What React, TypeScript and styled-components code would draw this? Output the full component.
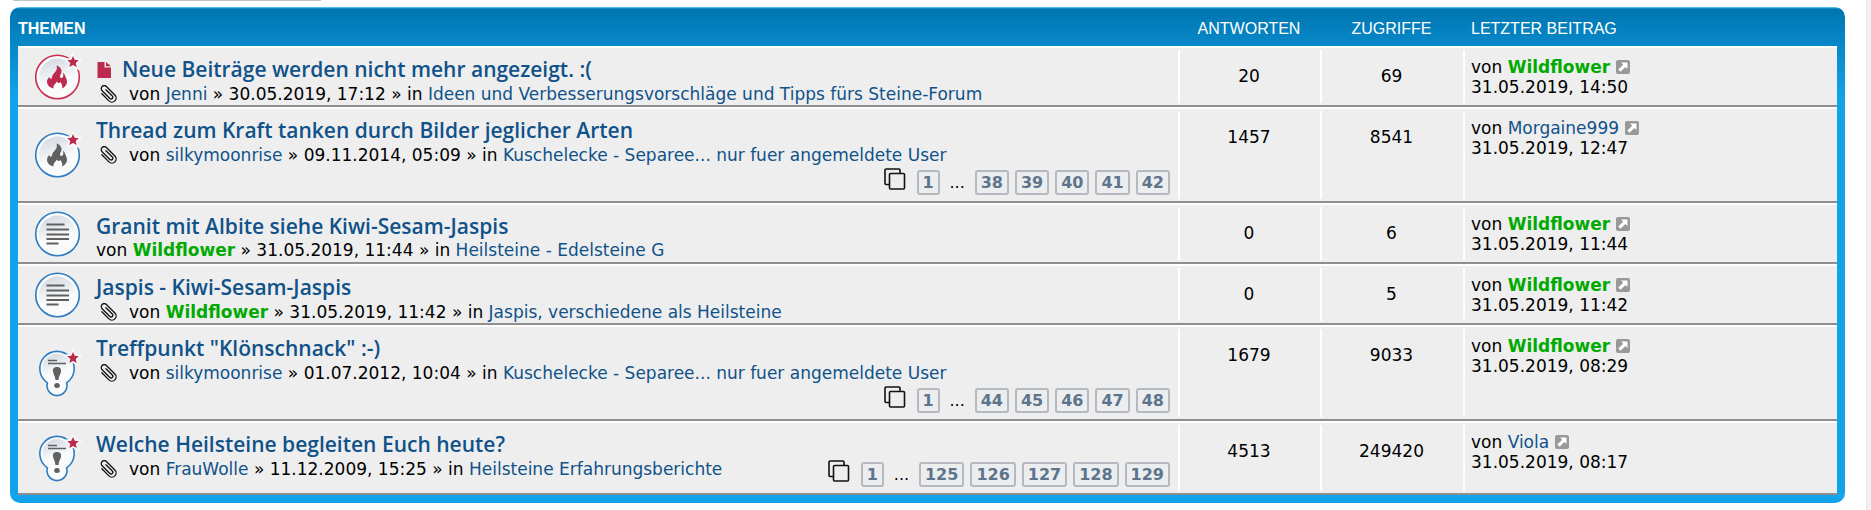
import React from "react";
import styled, { createGlobalStyle } from "styled-components";

const GlobalStyle = createGlobalStyle`
  * { box-sizing: border-box; }
  body {
    margin: 0;
    background: #f0f0f0;
    color: #000;
    font-family: "DejaVu Sans", Verdana, sans-serif;
    font-size: 17px;
  }
`;

const Page = styled.div`
  min-height: 100vh;
  margin-right: 4px;
  border-right: 1px solid #e6e9ed;
  background: #fff;
  padding: 0 21px 7px 10px;
`;

const ActionBar = styled.div`
  width: 308px;
  height: 1px;
  margin: 0 0 6px 3px;
  background: #c4c4c4;
`;

const Panel = styled.section`
  padding: 0 8px 8px;
  border-radius: 10px;
  background: linear-gradient(to bottom, #6aceff 0, #0076b1 2px, #12a3eb 92px, #12a3eb 100%);
`;

const Table = styled.table`
  width: 100%;
  table-layout: fixed;
  border-collapse: separate;
  border-spacing: 0;
`;

const Col = styled.col<{ $w?: string }>`
  width: ${(p) => p.$w ?? "auto"};
`;

const HeadCell = styled.th<{ $align?: string; $strong?: boolean; $indent?: number }>`
  height: 39px;
  padding: 4px 0 0 ${(p) => p.$indent ?? 0}px;
  color: #fff;
  font-family: "Liberation Sans", Arial, sans-serif;
  font-size: 16px;
  line-height: 20px;
  font-weight: ${(p) => (p.$strong ? 700 : 400)};
  text-align: ${(p) => p.$align ?? "left"};
  text-transform: uppercase;
`;

const Cell = styled.td`
  padding: 0;
  border-top: 2px solid #fff;
  border-bottom: 2px solid #8f8f8f;
  background-color: #eee;
  vertical-align: top;
`;

const IconCell = styled(Cell)`
  padding-left: 16px;
  vertical-align: middle;
  line-height: 0;
`;

const DividedCell = styled(Cell)`
  background-image: linear-gradient(#fff, #fff);
  background-size: 2px calc(100% - 4px);
  background-position: left center;
  background-repeat: no-repeat;
`;

const CountCell = styled(DividedCell)`
  padding-top: 18px;
  line-height: 20px;
  text-align: center;
`;

const LastPostCell = styled(DividedCell)`
  padding: 9px 0 0 8px;
  line-height: 20px;
`;

const Topic = styled.div`
  display: flex;
  flex-wrap: wrap;
  align-items: flex-start;
  padding: 8px 8px 0 0;
`;

const TitleLine = styled.div`
  display: flex;
  align-items: flex-start;
  flex: 0 0 100%;
  gap: 10px;
  height: 27px;
`;

const TitleLink = styled.a`
  color: #105289;
  font-family: "Open Sans", "Trebuchet MS", sans-serif;
  font-size: 21px;
  font-weight: 600;
  line-height: 26px;
  text-decoration: none;
`;

const Meta = styled.div<{ $clip?: boolean }>`
  display: flex;
  align-items: center;
  height: 22px;
  padding-bottom: ${(p) => (p.$clip ? 0 : 2)}px;
  line-height: 20px;
  white-space: pre;
`;

const ClipBox = styled.span`
  display: flex;
  width: 33px;
  padding-left: 3px;
`;

const UserLink = styled.a<{ $team?: boolean }>`
  color: ${(p) => (p.$team ? "#00aa00" : "#105289")};
  font-weight: ${(p) => (p.$team ? 700 : 400)};
  text-decoration: none;
`;

const Pagination = styled.nav`
  display: flex;
  align-items: center;
  gap: 6px;
  height: 25px;
  margin: 4px 0 6px auto;
`;

const PageLink = styled.a`
  height: 25px;
  padding: 0 4px;
  border: 2px solid #b4bac0;
  border-radius: 3px;
  background: #ecedee;
  color: #5c758c;
  font-size: 16px;
  font-weight: 700;
  line-height: 22px;
  text-decoration: none;
`;

const Ellipsis = styled.span`
  width: 23px;
  font-size: 16px;
  text-align: center;
`;

const CopyBox = styled.span`
  display: flex;
  margin: 0 5px 7px 0;
`;

const JumpLink = styled.a`
  display: inline-flex;
  margin-left: 6px;
  vertical-align: -1px;
`;

type Kind = "hotUnread" | "hot" | "read" | "announce";

const FLAME =
  "M22 11.700C27.500 14 28 18 26 21C25 22.800 25.500 24.500 27 24.500C29 24.300 29.300 21.500 28.300 19C30.500 20.500 30.500 22.500 31.500 24.500C34 29.500 31.500 33 27.500 35C28.500 32 27 30.500 26 28.500C25 30 23.500 30 22.500 28C22 29.500 19 30.500 18.800 35C13.500 33.500 11.500 29.500 13 26C14 23 16 23.500 16.200 26C17.500 25.500 17 23.500 18.500 21C20.500 18.500 23.500 16.500 22 11.700Z";

function StatusIcon({ kind }: { kind: Kind }) {
  const ring = kind === "hotUnread" ? "#c9304f" : "#2f7cc0";
  const ink = kind === "hotUnread" ? "#bc2a4d" : "#606060";
  const star = kind !== "read";
  return (
    <svg width="48" height="48" viewBox="0 0 48 48" aria-hidden="true">
      <defs>
        <linearGradient id={"disc-" + kind} x1="0" y1="0" x2="0.300" y2="1">
          <stop offset="0.100" stopColor="#d5dbe2" />
          <stop offset="0.700" stopColor="#f8fafb" />
        </linearGradient>
      </defs>
      {kind === "announce" ? (
        <>
          <path
            d="M13.400 33.800A17.200 17.200 0 1 1 32.600 33.800A10 10 0 1 1 13.400 33.800Z"
            fill="#fafbfc"
            stroke={ring}
            strokeWidth="1.600"
          />
          <circle cx="23" cy="19.500" r="14.500" fill={"url(#disc-" + kind + ")"} />
        </>
      ) : (
        <>
          <circle cx="23.500" cy="24" r="21.800" fill="#fafbfc" stroke={ring} strokeWidth="1.600" />
          <circle cx="23.500" cy="24" r="18.500" fill={"url(#disc-" + kind + ")"} />
        </>
      )}
      {(kind === "hot" || kind === "hotUnread") && <path d={FLAME} fill={ink} transform="translate(.5 .5)" />}
      {kind === "read" && (
        <path d="M12.500 14.500h18M12.500 19.500h22.500M12.500 24.500h22.500M12.500 29h22.500M12.500 33.500h12" stroke={ink} strokeWidth="2" />
      )}
      {kind === "announce" && (
        <>
          <path d="M14 11.500h9M14 14.500h18" stroke={ink} strokeWidth="1.400" />
          <path d="M23 18c3 0 4.500 2 4 4.500c-.5 3-2 4-2.500 8.500h-3c-.5-4.500-2-5.500-2.500-8.500c-.5-2.500 1-4.500 4-4.500z" fill={ink} />
          <ellipse cx="23" cy="36.500" rx="2.800" ry="2.500" fill={ink} />
        </>
      )}
      {star && (
        <path
          d="M39 3l1.700 3.800l4.100.4l-3.100 2.700l1 4.100l-3.700-2.100l-3.700 2.100l1-4.100l-3.100-2.700l4.100-.4z"
          fill="#bc2a4d"
          stroke="#f8f8f8"
          strokeWidth="3.500"
          paintOrder="stroke"
        />
      )}
    </svg>
  );
}

const FileIcon = () => (
  <svg width="16" height="22" viewBox="0 0 16 22" aria-hidden="true">
    <path d="M1.500 6h7v5.500H15V22H1.500zM10 6l5 4.300h-5z" fill="#bc2a4d" />
  </svg>
);

const ClipIcon = () => (
  <svg width="18" height="18" viewBox="-9 -9 18 18" fill="none" stroke="#111" strokeWidth="1.300" strokeLinecap="round" aria-hidden="true">
    <path
      d="M1.600-4.500V4.500A1.700 1.700 0 0 1-1.800 4.500V-6.500A3 3 0 0 1 4.200-6.500V5.500A4.200 4.200 0 0 1-4.200 5.500V-4.500"
      transform="rotate(-45)"
    />
  </svg>
);

const CopyIcon = () => (
  <svg width="22" height="22" viewBox="0 0 22 22" fill="none" stroke="#111" strokeWidth="1.600" aria-hidden="true">
    <rect x="5.500" y="5.500" width="15" height="15.500" rx="1" />
    <path d="M5 16.500H2a1 1 0 0 1-1-1V2a1 1 0 0 1 1-1h13a1 1 0 0 1 1 1v3" />
  </svg>
);

const JumpIcon = () => (
  <svg width="14" height="14" viewBox="0 0 14 14" aria-hidden="true">
    <rect width="14" height="14" rx="2" fill="#999" />
    <path d="M5 2.500h6.500V9L9.400 6.900L4.500 11.800L2.300 9.600L7.200 4.700z" fill="#fff" />
  </svg>
);

interface Row {
  kind: Kind;
  title: string;
  fresh?: boolean;
  clip?: boolean;
  author: string;
  date: string;
  forum: string;
  pages?: number[];
  replies: number;
  views: number;
  lastUser: string;
  lastDate: string;
}

const TEAM = ["Wildflower"];

const ROWS: Row[] = [
  { kind: "hotUnread", fresh: true, clip: true, title: "Neue Beiträge werden nicht mehr angezeigt. :(", author: "Jenni", date: "30.05.2019, 17:12", forum: "Ideen und Verbesserungsvorschläge und Tipps fürs Steine-Forum", replies: 20, views: 69, lastUser: "Wildflower", lastDate: "31.05.2019, 14:50" },
  { kind: "hot", clip: true, title: "Thread zum Kraft tanken durch Bilder jeglicher Arten", author: "silkymoonrise", date: "09.11.2014, 05:09", forum: "Kuschelecke - Separee... nur fuer angemeldete User", pages: [38, 39, 40, 41, 42], replies: 1457, views: 8541, lastUser: "Morgaine999", lastDate: "31.05.2019, 12:47" },
  { kind: "read", title: "Granit mit Albite siehe Kiwi-Sesam-Jaspis", author: "Wildflower", date: "31.05.2019, 11:44", forum: "Heilsteine - Edelsteine G", replies: 0, views: 6, lastUser: "Wildflower", lastDate: "31.05.2019, 11:44" },
  { kind: "read", clip: true, title: "Jaspis - Kiwi-Sesam-Jaspis", author: "Wildflower", date: "31.05.2019, 11:42", forum: "Jaspis, verschiedene als Heilsteine", replies: 0, views: 5, lastUser: "Wildflower", lastDate: "31.05.2019, 11:42" },
  { kind: "announce", clip: true, title: "Treffpunkt \"Klönschnack\" :-)", author: "silkymoonrise", date: "01.07.2012, 10:04", forum: "Kuschelecke - Separee... nur fuer angemeldete User", pages: [44, 45, 46, 47, 48], replies: 1679, views: 9033, lastUser: "Wildflower", lastDate: "31.05.2019, 08:29" },
  { kind: "announce", clip: true, title: "Welche Heilsteine begleiten Euch heute?", author: "FrauWolle", date: "11.12.2009, 15:25", forum: "Heilsteine Erfahrungsberichte", pages: [125, 126, 127, 128, 129], replies: 4513, views: 249420, lastUser: "Viola", lastDate: "31.05.2019, 08:17" },
];

const User = ({ name }: { name: string }) => (
  <UserLink href="#" $team={TEAM.includes(name)}>{name}</UserLink>
);

function TopicRow({ row }: { row: Row }) {
  return (
    <tr>
      <IconCell><StatusIcon kind={row.kind} /></IconCell>
      <Cell>
        <Topic>
          <TitleLine>
            {row.fresh && <FileIcon />}
            <TitleLink href="#">{row.title}</TitleLink>
          </TitleLine>
          <Meta $clip={row.clip}>
            {row.clip && <ClipBox><ClipIcon /></ClipBox>}
            <span>von <User name={row.author} /> » {row.date} » in <UserLink href="#">{row.forum}</UserLink></span>
          </Meta>
          {row.pages && (
            <Pagination>
              <CopyBox><CopyIcon /></CopyBox>
              <PageLink href="#">1</PageLink>
              <Ellipsis>...</Ellipsis>
              {row.pages.map((n) => <PageLink href="#" key={n}>{n}</PageLink>)}
            </Pagination>
          )}
        </Topic>
      </Cell>
      <CountCell>{row.replies}</CountCell>
      <CountCell>{row.views}</CountCell>
      <LastPostCell>
        von <User name={row.lastUser} />
        <JumpLink href="#" aria-label="Letzter Beitrag"><JumpIcon /></JumpLink>
        <br />
        {row.lastDate}
      </LastPostCell>
    </tr>
  );
}

export default function App() {
  return (
    <>
      <GlobalStyle />
      <Page>
        <ActionBar />
        <Panel>
          <Table>
            <colgroup>
              <Col $w="78px" />
              <Col />
              <Col $w="142px" />
              <Col $w="143px" />
              <Col $w="374px" />
            </colgroup>
            <thead>
              <tr>
                <HeadCell colSpan={2} $strong>Themen</HeadCell>
                <HeadCell $align="center">Antworten</HeadCell>
                <HeadCell $align="center">Zugriffe</HeadCell>
                <HeadCell $indent={8}>Letzter Beitrag</HeadCell>
              </tr>
            </thead>
            <tbody>
              {ROWS.map((row) => <TopicRow key={row.title} row={row} />)}
            </tbody>
          </Table>
        </Panel>
      </Page>
    </>
  );
}
